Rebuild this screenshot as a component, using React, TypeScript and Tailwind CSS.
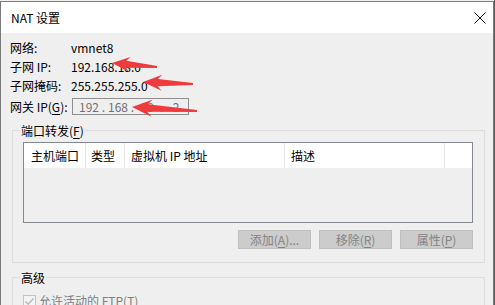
import React from "react";

const U = ({ c }: { c: string }) => (
  <span className="underline underline-offset-[2px] decoration-[1px]">{c}</span>
);

function arrowPoints(
  tx: number,
  ty: number,
  ex: number,
  ey: number,
  hl: number,
  hw: number,
  sw: number
) {
  const dx = ex - tx;
  const dy = ey - ty;
  const L = Math.hypot(dx, dy);
  const ux = dx / L;
  const uy = dy / L;
  const nx = -uy;
  const ny = ux;
  const p = (a: number, b: number) =>
    `${(tx + ux * a + nx * b).toFixed(2)},${(ty + uy * a + ny * b).toFixed(2)}`;
  return [
    p(0, 0),
    p(hl, hw),
    p(hl * 0.78, sw),
    p(L, 0.9),
    p(L, -0.9),
    p(hl * 0.78, -sw),
    p(hl, -hw),
  ].join(" ");
}

const Arrows = () => (
  <svg
    className="absolute inset-0 pointer-events-none"
    width={495}
    height={305}
    viewBox="0 0 495 305"
  >
    <polygon fill="#ef3b3b" points={arrowPoints(112, 63, 157, 67, 18, 7.5, 3.4)} />
    <polygon fill="#ef3b3b" points={arrowPoints(143, 82, 193, 84, 19, 8, 3.6)} />
    <polygon fill="#ef3b3b" points={arrowPoints(132, 107, 197, 111, 20, 8.5, 3.8)} />
  </svg>
);

const Row = ({ label, value, h }: { label: React.ReactNode; value: string; h: string }) => (
  <div className={`flex items-center ${h}`}>
    <div className="w-[61px] leading-[16px]">{label}</div>
    <div className="leading-[16px]">{value}</div>
  </div>
);

const Btn = ({ children }: { children: React.ReactNode }) => (
  <div className="w-[73px] h-[19px] bg-[#cccccc] border border-[#bfbfbf] flex items-center justify-center text-[#838383] leading-[16px]">
    {children}
  </div>
);

export default function App() {
  return (
    <div className="relative w-[495px] h-[305px] overflow-hidden bg-[#f2f2f2] font-['Noto_Sans_CJK_SC',sans-serif] text-[12px] text-black">
      <div className="flex h-full">
        <div className="mt-[1px] w-[494px] h-[304px] border-l border-t border-r border-[#7a7a7a] flex flex-col bg-[#efefef]">
          {/* title bar */}
          <div className="h-[31px] shrink-0 bg-white flex items-center justify-between pl-[10px] pr-[7px]">
            <span className="leading-[16px] text-[12px]">NAT 设置</span>
            <svg width="12" height="12" viewBox="0 0 12 12">
              <path d="M0.5 0.5 L11.5 11.5 M11.5 0.5 L0.5 11.5" stroke="#111" strokeWidth="1" />
            </svg>
          </div>

          {/* body */}
          <div className="flex flex-col pl-[9px] pr-[9px]">
            <div className="mt-[6px]">
              <Row h="h-[18px]" label="网络:" value="vmnet8" />
              <Row h="h-[19px]" label="子网 IP:" value="192.168.18.0" />
              <Row h="h-[19px]" label="子网掩码:" value="255.255.255.0" />
            </div>
            <div className="mt-[3px] flex items-center h-[17px]">
              <div className="w-[62px] leading-[16px]">
                网关 IP(<U c="G" />):
              </div>
              <div className="w-[117px] h-[17px] border border-[#8f8f8f] flex items-center pl-[5px] text-[#6f6f6f] leading-[14px]">
                <span className="w-[22px] text-center">192</span>
                <span className="w-[7px] text-center">.</span>
                <span className="w-[22px] text-center">168</span>
                <span className="w-[7px] text-center">.</span>
                <span className="w-[22px] text-center">18</span>
                <span className="w-[7px] text-center">.</span>
                <span className="w-[22px] text-center">2</span>
              </div>
            </div>

            {/* port forwarding group */}
            <div className="relative mt-[15px] ml-[2px] w-[473px] border border-[#dcdcdc] pt-[11px] pl-[10px] pr-[11px] pb-[13px]">
              <div className="absolute -top-[8px] left-[7px] px-[1px] bg-[#efefef] leading-[16px]">
                端口转发(<U c="F" />)
              </div>
              <div className="w-[450px] h-[81px] border border-[#828790] bg-[#efefef] flex flex-col">
                <div className="h-[25px] bg-white flex items-center leading-[16px]">
                  <div className="w-[62px] h-full border-r border-[#e5e5e5] flex items-center pl-[7px]">主机端口</div>
                  <div className="w-[39px] h-full border-r border-[#e5e5e5] flex items-center pl-[5px]">类型</div>
                  <div className="w-[160px] h-full border-r border-[#e5e5e5] flex items-center pl-[6px]">虚拟机 IP 地址</div>
                  <div className="w-[160px] h-full border-r border-[#e5e5e5] flex items-center pl-[6px]">描述</div>
                  <div className="flex-1 h-full" />
                </div>
              </div>
              <div className="mt-[7px] flex justify-end gap-[8px]">
                <Btn>
                  添加(<U c="A" />)...
                </Btn>
                <Btn>
                  移除(<U c="R" />)
                </Btn>
                <Btn>
                  属性(<U c="P" />)
                </Btn>
              </div>
            </div>

            {/* advanced group */}
            <div className="relative mt-[14px] ml-[2px] w-[473px] h-[60px] border border-[#dcdcdc] pt-[15px] pl-[10px]">
              <div className="absolute -top-[8px] left-[7px] px-[1px] bg-[#efefef] leading-[16px]">高级</div>
              <div className="flex items-center gap-[3px] text-[#808080] leading-[16px]">
                <div className="w-[13px] h-[13px] border border-[#c3c3c3] bg-[#f4f4f4] flex items-center justify-center">
                  <svg width="11" height="11" viewBox="0 0 11 11">
                    <path d="M1.5 5.5 L4.2 8.2 L9.5 2.5" stroke="#b8b8b8" strokeWidth="1.4" fill="none" />
                  </svg>
                </div>
                <span>
                  允许活动的 FTP(<U c="T" />)
                </span>
              </div>
            </div>
          </div>
        </div>
        <div className="w-[1px] h-full bg-[#5a5a5a]" />
      </div>
      <Arrows />
    </div>
  );
}
